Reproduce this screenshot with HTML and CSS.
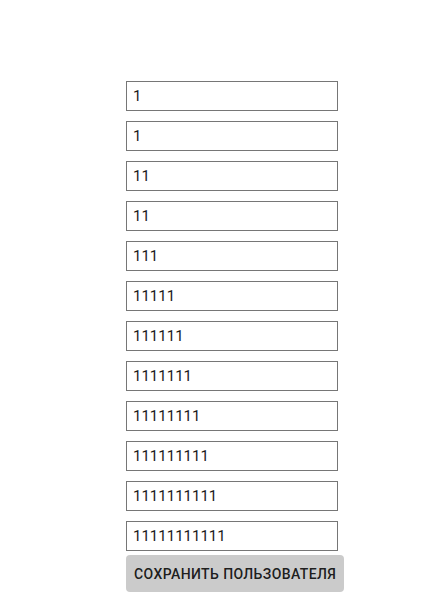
FILE: index.html
```html
<!DOCTYPE html>
<html>
<head>
<meta charset="utf-8">
<link rel="stylesheet" href="styles.css">
</head>
<body>
<form class="form">
  <div class="fields">
    <input class="field" value="1">
    <input class="field" value="1">
    <input class="field" value="11">
    <input class="field" value="11">
    <input class="field" value="111">
    <input class="field" value="11111">
    <input class="field" value="111111">
    <input class="field" value="1111111">
    <input class="field" value="11111111">
    <input class="field" value="111111111">
    <input class="field" value="1111111111">
    <input class="field" value="11111111111">
  </div>
  <button type="button" class="save">Сохранить пользователя</button>
</form>
</body>
</html>
```
FILE: styles.css
```css
html, body {
  margin: 0;
  padding: 0;
  background: #fff;
}
.form {
  display: flex;
  flex-direction: column;
  align-items: flex-start;
  padding: 81px 0 0 126px;
  font-family: Roboto, "Noto Sans", sans-serif;
}
.fields {
  display: flex;
  flex-direction: column;
  gap: 10px;
}
.field {
  box-sizing: border-box;
  width: 212px;
  height: 30px;
  margin: 0;
  padding: 0 6px;
  border: 1px solid #767676;
  border-radius: 0;
  font-family: Roboto, sans-serif;
  font-size: 15px;
  color: #1a1a1a;
  outline: none;
}
.save {
  margin-top: 4px;
  box-sizing: border-box;
  height: 37px;
  padding: 0 8px;
  border: none;
  border-radius: 4px;
  background: #cbcbcb;
  color: rgba(0, 0, 0, 0.87);
  font-family: Roboto, sans-serif;
  font-weight: 500;
  font-size: 14px;
  letter-spacing: 0.4px;
  text-transform: uppercase;
  cursor: pointer;
}
```
